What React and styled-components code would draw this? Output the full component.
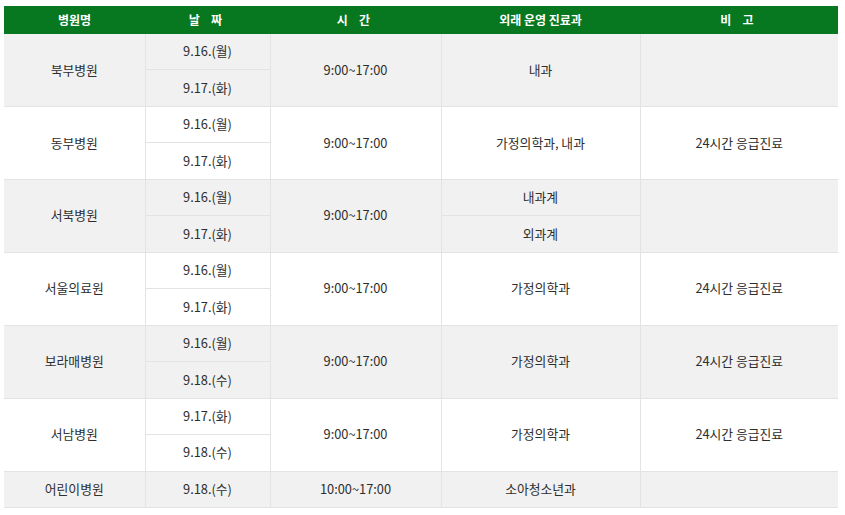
import React from 'react';
import styled, { createGlobalStyle } from 'styled-components';

const GlobalStyle = createGlobalStyle`
  html, body {
    margin: 0;
    padding: 0;
    background: #fff;
  }
  body {
    font-family: "Noto Sans CJK KR", "Noto Sans", sans-serif;
    color: #333;
  }
`;

const Wrap = styled.div`
  padding: 6px 7px 0 4px;
`;

const Table = styled.table`
  width: 834px;
  border-collapse: collapse;
  table-layout: fixed;
  font-size: 12.8px;
  line-height: 1;
`;

const Head = styled.th`
  height: 28px;
  padding: 0;
  background: #077720;
  color: #fff;
  font-weight: 700;
  font-size: 12px;
  text-align: center;
  letter-spacing: ${p => (p.$spaced ? '0.35em' : '0')};
`;

const Cell = styled.td`
  height: 35.48px;
  padding: 0;
  text-align: center;
  vertical-align: middle;
  color: #2e2e2e;
  background: ${p => (p.$grey ? '#f1f1f1' : '#fff')};
  border: 1px solid #e3e3e3;
  border-top: ${p => (p.$first ? '0' : '1px solid #e3e3e3')};
  &:first-child { border-left: 0; }
  &:last-child { border-right: 0; }
`;

const hospitals = [
  { name: '북부병원', dates: ['9.16.(월)', '9.17.(화)'], time: '9:00~17:00', dept: ['내과'], note: '' },
  { name: '동부병원', dates: ['9.16.(월)', '9.17.(화)'], time: '9:00~17:00', dept: ['가정의학과, 내과'], note: '24시간 응급진료' },
  { name: '서북병원', dates: ['9.16.(월)', '9.17.(화)'], time: '9:00~17:00', dept: ['내과계', '외과계'], note: '' },
  { name: '서울의료원', dates: ['9.16.(월)', '9.17.(화)'], time: '9:00~17:00', dept: ['가정의학과'], note: '24시간 응급진료' },
  { name: '보라매병원', dates: ['9.16.(월)', '9.18.(수)'], time: '9:00~17:00', dept: ['가정의학과'], note: '24시간 응급진료' },
  { name: '서남병원', dates: ['9.17.(화)', '9.18.(수)'], time: '9:00~17:00', dept: ['가정의학과'], note: '24시간 응급진료' },
  { name: '어린이병원', dates: ['9.18.(수)'], time: '10:00~17:00', dept: ['소아청소년과'], note: '' },
];

const HospitalRows = ({ h, grey, first }) => {
  const span = h.dates.length;
  const deptSpan = h.dept.length === span ? 1 : span;
  return (
    <>
      <tr>
        <Cell $grey={grey} $first={first} rowSpan={span}>{h.name}</Cell>
        <Cell $grey={grey} $first={first}>{h.dates[0]}</Cell>
        <Cell $grey={grey} $first={first} rowSpan={span}>{h.time}</Cell>
        <Cell $grey={grey} $first={first} rowSpan={deptSpan}>{h.dept[0]}</Cell>
        <Cell $grey={grey} $first={first} rowSpan={span}>{h.note}</Cell>
      </tr>
      {h.dates.slice(1).map((d, i) => (
        <tr key={d}>
          <Cell $grey={grey}>{d}</Cell>
          {deptSpan === 1 && <Cell $grey={grey}>{h.dept[i + 1]}</Cell>}
        </tr>
      ))}
    </>
  );
};

export default function App() {
  return (
    <Wrap>
      <GlobalStyle />
      <Table>
        <colgroup>
          <col style={{ width: 141 }} />
          <col style={{ width: 125 }} />
          <col style={{ width: 171 }} />
          <col style={{ width: 199 }} />
          <col style={{ width: 198 }} />
        </colgroup>
        <thead>
          <tr>
            <Head>병원명</Head>
            <Head $spaced>날 짜</Head>
            <Head $spaced>시 간</Head>
            <Head>외래 운영 진료과</Head>
            <Head $spaced>비 고</Head>
          </tr>
        </thead>
        <tbody>
          {hospitals.map((h, i) => (
            <HospitalRows key={h.name} h={h} grey={i % 2 === 0} first={i === 0} />
          ))}
        </tbody>
      </Table>
    </Wrap>
  );
}
